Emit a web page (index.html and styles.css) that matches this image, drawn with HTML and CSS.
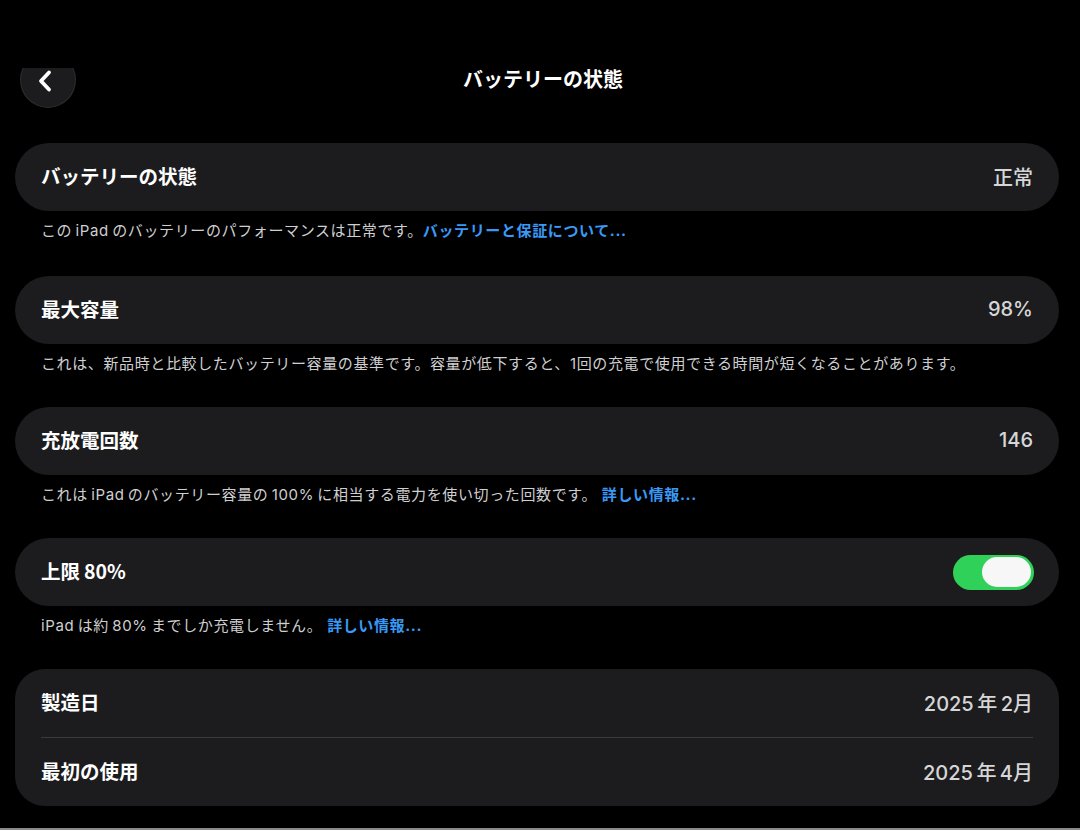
FILE: index.html
```html
<!DOCTYPE html>
<html lang="ja">
<head>
<meta charset="utf-8">
<title>バッテリーの状態</title>
<link rel="stylesheet" href="styles.css">
</head>
<body>
<div class="page">
  <header class="nav">
    <div class="back-clip">
      <div class="back">
        <svg class="chev" width="18" height="24" viewBox="0 0 18 24"><path d="M13 3.5 L5 12 L13 20.5" fill="none" stroke="#fff" stroke-width="3.8" stroke-linecap="round" stroke-linejoin="round"/></svg>
      </div>
    </div>
    <div class="title">バッテリーの状態</div>
    <div></div>
  </header>

  <section class="group">
    <div class="card">
      <div class="row"><span class="label">バッテリーの状態</span><span class="value">正常</span></div>
    </div>
    <p class="note">この&thinsp;iPad&thinsp;のバッテリーのパフォーマンスは正常です。<span class="link">バッテリーと保証について...</span></p>
  </section>

  <section class="group">
    <div class="card">
      <div class="row"><span class="label">最大容量</span><span class="value">98%</span></div>
    </div>
    <p class="note">これは、新品時と比較したバッテリー容量の基準です。容量が低下すると、1回の充電で使用できる時間が短くなることがあります。</p>
  </section>

  <section class="group">
    <div class="card">
      <div class="row"><span class="label">充放電回数</span><span class="value">146</span></div>
    </div>
    <p class="note">これは&thinsp;iPad&thinsp;のバッテリー容量の&thinsp;100%&thinsp;に相当する電力を使い切った回数です。 <span class="link">詳しい情報...</span></p>
  </section>

  <section class="group">
    <div class="card">
      <div class="row"><span class="label">上限&thinsp;80%</span><span class="toggle"><span class="knob"></span></span></div>
    </div>
    <p class="note">iPad&thinsp;は約&thinsp;80%&thinsp;までしか充電しません。 <span class="link">詳しい情報...</span></p>
  </section>

  <section class="group">
    <div class="card card-multi">
      <div class="row"><span class="label">製造日</span><span class="value">2025&thinsp;年&thinsp;2月</span></div>
      <div class="divider"></div>
      <div class="row"><span class="label">最初の使用</span><span class="value">2025&thinsp;年&thinsp;4月</span></div>
    </div>
  </section>
</div>
<div class="edge"></div>
</body>
</html>
```

FILE: styles.css
```css
html, body {
  margin: 0;
  padding: 0;
  background: #000;
}
body {
  width: 1080px;
  height: 830px;
  overflow: hidden;
  position: relative;
  font-family: "Inter", "Noto Sans CJK JP", sans-serif;
  color: #fff;
}
.page {
  padding: 0 21px 0 15px;
}
.nav {
  height: 143px;
  display: grid;
  grid-template-columns: 1fr auto 1fr;
  align-items: start;
}
.back-clip {
  margin-top: 68px;
  margin-left: 5px;
  width: 56px;
  height: 40px;
  overflow: hidden;
}
.back {
  width: 56px;
  height: 56px;
  margin-top: -16px;
  border-radius: 50%;
  background: #1c1c1e;
  box-shadow: inset 0 0 0 1px rgba(255,255,255,0.08);
  display: flex;
  align-items: center;
  justify-content: center;
}
.chev {
  margin-left: -6px;
  margin-top: 2px;
}
.title {
  margin-top: 65px;
  line-height: 28px;
  font-size: 20px;
  font-weight: 700;
  font-family: "Noto Sans CJK JP", sans-serif;
  margin-left: 12px;
}
.group {
  margin-bottom: 33px;
}
.group:first-of-type {
  margin-bottom: 35px;
}
.card {
  background: #1c1c1e;
  border-radius: 34px;
  padding: 0 26px 0 26px;
}
.card-multi {
  border-radius: 30px;
}
.row {
  height: 68px;
  display: flex;
  align-items: center;
  justify-content: space-between;
}
.label {
  font-size: 19.5px;
  font-weight: 600;
  font-family: "Noto Sans CJK JP", sans-serif;
  color: #fff;
  margin-top: -3px;
}
.value {
  font-size: 20px;
  color: #d6d6d8;
  font-weight: 500;
  margin-top: -2px;
}
.divider {
  height: 1px;
  background: #3a3a3c;
}
.note {
  margin: 10px 0 0 26px;
  font-size: 15px;
  line-height: 20px;
  color: #cfcfd2;
  letter-spacing: 0.62px;
  white-space: nowrap;
}
.link {
  color: #3a99f5;
  font-weight: 700;
}
.toggle {
  width: 81px;
  height: 35px;
  border-radius: 18px;
  background: #30d158;
  display: flex;
  align-items: center;
  justify-content: flex-end;
  padding-right: 3px;
  box-sizing: border-box;
  margin-right: -1px;
}
.knob {
  width: 49px;
  height: 30px;
  border-radius: 15px;
  background: #f7f7f7;
}
.edge {
  position: absolute;
  left: 0;
  right: 0;
  bottom: 0;
  height: 2px;
  background: #8a8a8a;
}
```
